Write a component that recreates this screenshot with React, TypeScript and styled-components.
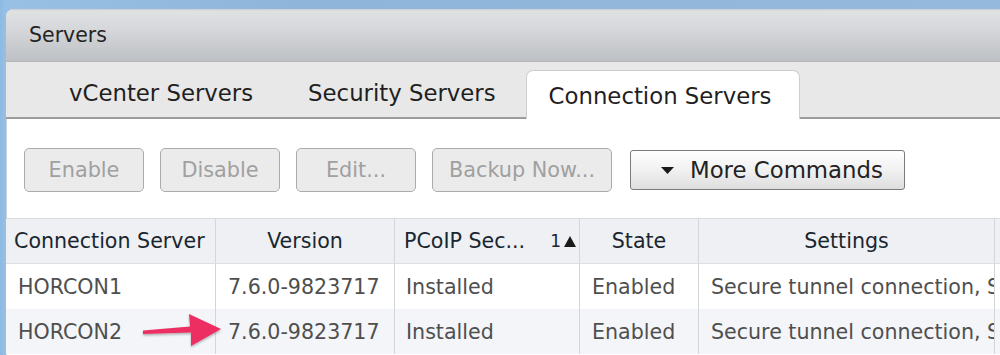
import React from "react";
import styled, { createGlobalStyle } from "styled-components";

const Global = createGlobalStyle`
  html, body { margin: 0; padding: 0; }
  body {
    width: 1000px;
    height: 355px;
    overflow: hidden;
    background: linear-gradient(90deg, #8db9e3 0px, #98c0e4 6px, #8fb5da 30%, #95b9dc 100%);
    font-family: "DejaVu Sans", Verdana, sans-serif;
  }
`;

const Frame = styled.div`
  padding: 9px 0 0 6px;
  height: 355px;
  box-sizing: border-box;
`;

const Panel = styled.div`
  background: #ffffff;
  border-top-left-radius: 8px;
  height: 100%;
  display: flex;
  flex-direction: column;
  overflow: hidden;
  box-shadow: inset 1px 0 0 #c9d3dd;
`;

const Header = styled.div`
  height: 53px;
  box-sizing: border-box;
  display: flex;
  align-items: center;
  padding: 0 0 1px 23px;
  font-size: 20.5px;
  color: #242424;
  background: linear-gradient(180deg, #c9ccd0 0px, #e0e1e3 2px, #d3d5d8 45%, #bdc0c4 100%);
  border-bottom: 1px solid #b3b6b9;
`;

const TabBar = styled.div`
  height: 57px;
  box-sizing: border-box;
  display: flex;
  align-items: flex-end;
  padding-left: 35px;
  background: #e8e8e8;
  border-bottom: 2px solid #9c9c9c;
`;

const Tab = styled.div<{ $active?: boolean }>`
  height: 49px;
  box-sizing: border-box;
  margin-bottom: -2px;
  display: flex;
  align-items: center;
  padding: ${(p) => (p.$active ? "2px 28px 0 22px" : "0 26px 4px 27px")};
  margin-left: ${(p) => (p.$active ? "3px" : "0")};
  font-size: 22.8px;
  color: #1f1f1f;
  white-space: nowrap;
  background: ${(p) => (p.$active ? "#ffffff" : "transparent")};
  border: 1px solid ${(p) => (p.$active ? "#cdcdcd" : "transparent")};
  border-bottom: none;
  border-radius: 7px 7px 0 0;
`;

const Toolbar = styled.div`
  display: flex;
  align-items: center;
  gap: 16px;
  padding: 29px 0 26px 18px;
`;

const Button = styled.div<{ $w: number }>`
  width: ${(p) => p.$w}px;
  height: 44px;
  box-sizing: border-box;
  display: flex;
  align-items: center;
  justify-content: center;
  border: 1.5px solid #ababab;
  border-radius: 5px;
  background: #ebebeb;
  color: #a0a0a0;
  font-size: 20.8px;
  white-space: nowrap;
`;

const MoreButton = styled.div`
  width: 275px;
  height: 40px;
  margin-left: 2px;
  box-sizing: border-box;
  display: flex;
  align-items: center;
  gap: 16px;
  border: 1.5px solid #7b7b7b;
  border-radius: 3px;
  background: linear-gradient(180deg, #ffffff 0%, #f1f1f1 50%, #dedede 100%);
  color: #222222;
  font-size: 22.8px;
  padding-left: 30px;
  white-space: nowrap;
`;

const Table = styled.div`
  position: relative;
  border-top: 1px solid #d9dbde;
`;

const Row = styled.div<{ $head?: boolean; $alt?: boolean }>`
  display: grid;
  grid-template-columns: 210px 179px 185px 119px 296px 1fr;
  height: 45px;
  background: ${(p) => (p.$head ? "#eef0f3" : p.$alt ? "#f3f5f8" : "#ffffff")};
  border-bottom: ${(p) => (p.$head ? "1px solid #dcdfe3" : "none")};
  box-sizing: border-box;
`;

const Cell = styled.div<{ $align?: "left" | "center"; $pad?: number; $head?: boolean }>`
  display: flex;
  align-items: center;
  justify-content: ${(p) => (p.$align === "center" ? "center" : "flex-start")};
  padding-left: ${(p) => p.$pad ?? 12}px;
  box-sizing: border-box;
  border-right: 1px solid ${(p) => (p.$head ? "#d3d6da" : "#d2d5d9")};
  font-size: 20.6px;
  color: ${(p) => (p.$head ? "#1a2630" : "#4f4f4f")};
  white-space: nowrap;
  overflow: hidden;
  min-width: 0;
`;

const SortCell = styled(Cell)`
  justify-content: space-between;
  padding-right: 3px;
`;

const SortMark = styled.span`
  display: flex;
  align-items: center;
  gap: 3px;
  font-size: 17px;
`;

const Arrow = styled.svg`
  position: absolute;
  left: 132px;
  top: 91px;
`;

const Caret = styled.svg`
  flex: none;
`;

export default function App() {
  return (
    <>
      <Global />
      <Frame>
        <Panel>
          <Header>Servers</Header>
          <TabBar>
            <Tab>vCenter Servers</Tab>
            <Tab>Security Servers</Tab>
            <Tab $active>Connection Servers</Tab>
          </TabBar>
          <Toolbar>
            <Button $w={120}>Enable</Button>
            <Button $w={120}>Disable</Button>
            <Button $w={120}>Edit...</Button>
            <Button $w={180}>Backup Now...</Button>
            <MoreButton>
              <Caret width="13" height="7" viewBox="0 0 13 7">
                <polygon points="0,0 13,0 6.5,7" fill="#1a1a1a" />
              </Caret>
              More Commands
            </MoreButton>
          </Toolbar>
          <Table>
            <Row $head>
              <Cell $head $pad={8}>Connection Server</Cell>
              <Cell $head $align="center" $pad={0}>Version</Cell>
              <SortCell $head $pad={9}>
                PCoIP Sec...
                <SortMark>
                  <span>1</span>
                  <svg width="12" height="11" viewBox="0 0 12 11">
                    <polygon points="6,0 12,11 0,11" fill="#1a1a1a" />
                  </svg>
                </SortMark>
              </SortCell>
              <Cell $head $align="center" $pad={0}>State</Cell>
              <Cell $head $align="center" $pad={0}>Settings</Cell>
              <Cell $head />
            </Row>
            <Row>
              <Cell>HORCON1</Cell>
              <Cell>7.6.0-9823717</Cell>
              <Cell $pad={11}>Installed</Cell>
              <Cell>Enabled</Cell>
              <Cell>Secure tunnel connection, Secure</Cell>
              <Cell />
            </Row>
            <Row $alt>
              <Cell>HORCON2</Cell>
              <Cell>7.6.0-9823717</Cell>
              <Cell $pad={11}>Installed</Cell>
              <Cell>Enabled</Cell>
              <Cell>Secure tunnel connection, Secure</Cell>
              <Cell />
            </Row>
            <Arrow width="88" height="42" viewBox="0 0 88 42">
              <defs>
                <filter id="sh" x="-20%" y="-20%" width="140%" height="160%">
                  <feDropShadow dx="0" dy="1.5" stdDeviation="1.2" floodColor="#000" floodOpacity="0.3" />
                </filter>
              </defs>
              <path
                d="M5 20.5 L52 16.5 L51 4 L83 19 L53 36 L53 22.5 L5 24 Z"
                fill="#ec2f63"
                filter="url(#sh)"
              />
            </Arrow>
          </Table>
        </Panel>
      </Frame>
    </>
  );
}
